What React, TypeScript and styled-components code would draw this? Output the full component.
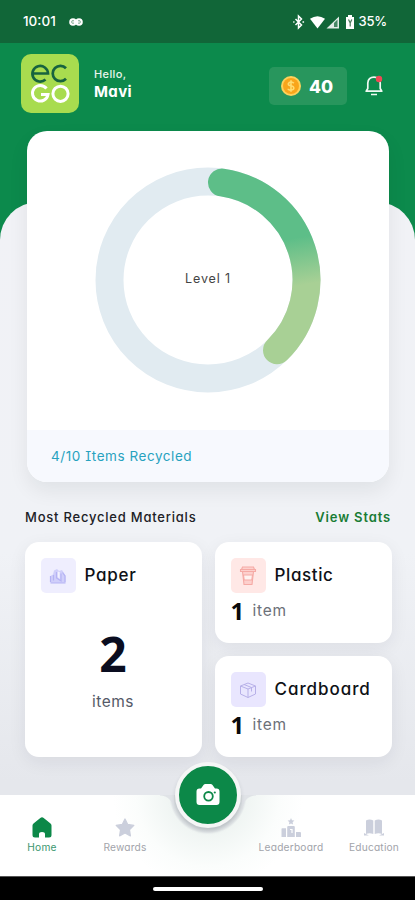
import React from 'react';
import styled, { createGlobalStyle } from 'styled-components';

const GlobalStyle = createGlobalStyle`
  * { box-sizing: border-box; }
  body {
    margin: 0;
    background: #f0f2f6;
    font-family: Inter, "Open Sans", sans-serif;
    font-feature-settings: "cv11", "cv08";
  }
`;

const Screen = styled.div`
  width: 415px;
  height: 900px;
  display: flex;
  flex-direction: column;
  overflow: hidden;
  background: #0c8a4c;
`;

const Label = styled.span<{ $size: number; $weight?: number; $color?: string; $track?: number }>`
  font-size: ${p => p.$size}px;
  font-weight: ${p => p.$weight ?? 400};
  color: ${p => p.$color ?? '#0e1116'};
  letter-spacing: ${p => p.$track ?? 0}px;
  line-height: 1.2;
  white-space: nowrap;
`;

const StatusBar = styled.div`
  height: 43px;
  flex: none;
  display: flex;
  align-items: center;
  gap: 13px;
  padding: 0 28px 0 23px;
  background: #116638;
`;

const StatusIcons = styled.div`
  display: flex;
  align-items: center;
  gap: 3px;
  margin-left: auto;
`;

const Header = styled.header`
  height: 88px;
  flex: none;
  display: flex;
  align-items: flex-start;
  padding: 11px 31px 0 21px;
`;

const Greeting = styled.div`
  display: flex;
  flex-direction: column;
  gap: 2px;
  padding: 14px 0 0 15px;
`;

const Coins = styled.div`
  display: flex;
  align-items: center;
  gap: 8px;
  width: 78px;
  height: 38px;
  margin: 13px 17px 0 auto;
  padding-left: 12px;
  border-radius: 5px;
  background: #28965d;
`;

const Bell = styled.div`
  height: 22px;
  margin-top: 21px;
`;

const Sheet = styled.main`
  flex: 1;
  margin-top: 71px;
  display: flex;
  flex-direction: column;
  border-radius: 38px 38px 0 0;
  background: linear-gradient(#f1f2f6 0, #f0f2f6 350px, #e5e7ec 580px);
`;

const LevelCard = styled.section`
  width: 362px;
  height: 351px;
  flex: none;
  margin: -71px 0 0 27px;
  display: flex;
  flex-direction: column;
  border-radius: 20px;
  overflow: hidden;
  background: #fff;
  box-shadow: 0 9px 20px rgba(20, 24, 30, 0.07);
`;

const RingArea = styled.div`
  display: grid;
  height: 299px;
  padding: 36px 0 0 68px;
  & > * { grid-area: 1 / 1; }
`;

const RingLabel = styled.div`
  width: 226px;
  height: 226px;
  display: grid;
  place-items: center;
  padding-bottom: 4px;
`;

const CardFooter = styled.div`
  flex: 1;
  display: flex;
  align-items: center;
  padding-left: 24px;
  background: #f7f9fe;
`;

const SectionTitle = styled.div`
  display: flex;
  justify-content: space-between;
  align-items: center;
  height: 20px;
  margin: 26px 24px 14px 25px;
`;

const Materials = styled.section`
  display: grid;
  grid-template-columns: 177px 177px;
  grid-template-rows: 101px 101px;
  gap: 13px;
  padding-left: 24.500px;
`;

const MaterialCard = styled.article<{ $tall?: boolean }>`
  grid-row: ${p => (p.$tall ? 'span 2' : 'auto')};
  padding: 16px;
  border-radius: 14px;
  background: #fff;
  box-shadow: 0 5px 18px rgba(30, 34, 50, 0.07);
`;

const MaterialHead = styled.div`
  display: flex;
  align-items: center;
  gap: 9px;
`;

const Tile = styled.div<{ $color: string }>`
  width: 35px;
  height: 35px;
  display: grid;
  place-items: center;
  border-radius: 5px;
  background: ${p => p.$color};
`;

const CountRow = styled.div`
  display: flex;
  align-items: center;
  gap: 9px;
  margin-top: 5px;
`;

const OneDigit = styled.span`
  width: 13px;
  font: 700 24px/26px "Noto Sans", sans-serif;
  color: #08090c;
`;

const CountStack = styled.div`
  display: flex;
  flex-direction: column;
  align-items: center;
  padding-top: 32px;
  gap: 11px;
`;

const BigCount = styled.span`
  font: 700 48px/57px "Open Sans", sans-serif;
  color: #0a0d20;
`;

const Nav = styled.nav`
  position: relative;
  flex: none;
  height: 81px;
  display: flex;
  background: radial-gradient(circle at 208px 0, #d9dde0 34px, #e2e6e8 37px, #f0f5f3 39px, #fbfdfc 72px, #fff 95px);
`;

const NavItem = styled.a<{ $left: number; $width: number }>`
  width: ${p => p.$width}px;
  margin-left: ${p => p.$left}px;
  flex: none;
  padding-top: 21px;
  display: flex;
  flex-direction: column;
  align-items: center;
  gap: 1px;
`;

const Shoulder = styled.i<{ $right?: boolean }>`
  position: absolute;
  top: 0;
  left: ${p => (p.$right ? 242 : 160)}px;
  width: 14px;
  height: 14px;
  background: radial-gradient(circle at ${p => (p.$right ? '100%' : '0')} 100%, transparent 13px, #e0e3e7 14px);
`;

const CameraButton = styled.button`
  position: absolute;
  left: 175px;
  top: -33px;
  width: 66px;
  height: 66px;
  display: grid;
  place-items: center;
  padding: 0;
  border: 4px solid #f5f6f6;
  border-radius: 50%;
  background: #0c8848;
  box-shadow: 0 3px 4px rgba(40, 50, 60, 0.16);
`;

const SystemBar = styled.div`
  height: 24px;
  flex: none;
  display: grid;
  place-items: center;
  background: #000;
  border-top: 1px solid #555;
`;

const Handle = styled.div`
  width: 110px;
  height: 4px;
  border-radius: 2px;
  background: #fff;
`;

const InfinityIcon = () => (
  <svg width="14" height="10" viewBox="0 0 14 10">
    <circle cx="4" cy="5" r="3.800" fill="#fff" />
    <circle cx="10" cy="5" r="3.800" fill="#fff" />
    <path d="M5 3.800Q2.500 3 2.600 5T5 6.100M9 3.800Q11.500 3 11.400 5T9 6.100" fill="none" stroke="#6f9f83" strokeWidth=".9" />
  </svg>
);

const SignalIcons = () => (
  <svg width="64" height="16" viewBox="0 0 64 16">
    <path d="M3.500 5l6 6L6.500 14V2l3 3-6 6M1.200 8h1.300M10.500 8h1.600" fill="none" stroke="#fff" strokeWidth="1.500" />
    <path d="M18 4.800q7.500-5 15 0L25.500 14.500Z" fill="#fff" />
    <path d="M34.500 14.500L47 2.500V14.500Z" fill="#fff" opacity=".88" />
    <path d="M42 9v4h3.500V5.500Z" fill="#116638" opacity=".75" />
    <path d="M54 3h2V1h4v2h2v12h-8Z" fill="#fff" />
    <path d="M56.500 5.500L58.200 9V12.500M59.800 5.500L58.200 9" fill="none" stroke="#4a7c5d" strokeWidth="1.200" />
  </svg>
);

const LogoBox = styled.div`
  width: 58px;
  height: 59px;
  display: flex;
  justify-content: center;
  padding-top: 4px;
  border-radius: 10px;
  background: #a8dc4f;
`;

const LogoIcon = () => (
  <LogoBox aria-label="ecgo">
    <svg width="40" height="48" viewBox="0 0 40 48" fill="none">
      <g stroke="#17633f" strokeWidth="2.700">
        <path d="M2.500 15.500H18A7.800 7.800 0 1 0 15.500 21.500" />
        <path d="M36 10.200A7.700 7.700 0 1 0 36 20.800" />
      </g>
      <g stroke="#fff" strokeWidth="3">
        <path d="M16.500 30.500A7.800 7.800 0 1 0 18 36.500H11" />
        <circle cx="30.500" cy="35.800" r="7.600" />
      </g>
    </svg>
  </LogoBox>
);

const CoinIcon = () => (
  <svg width="20" height="20" viewBox="0 0 20 20">
    <circle cx="10" cy="10" r="10" fill="#ffd15b" />
    <circle cx="10" cy="10" r="8" fill="#f9a51b" />
    <path d="M12.800 7.200Q12 6 10 6T7.300 7.900Q7.300 9.300 10 9.800T12.800 12Q12.800 14 10 14T7.200 12.700M10 4.200V15.800" fill="none" stroke="#ffdc70" strokeWidth="1.600" />
  </svg>
);

const BellIcon = () => (
  <svg width="20" height="22" viewBox="0 0 20 22">
    <path d="M2.200 16.200 3.800 13.500V8Q4.300 2.200 10 2.200T16.200 8v5.500l1.600 2.700ZM7 19.500h6" fill="none" stroke="#effaf3" strokeWidth="1.700" strokeLinejoin="round" />
    <circle cx="15" cy="4" r="3.200" fill="#ee4956" />
  </svg>
);

const ProgressRing = () => (
  <svg width="226" height="226" viewBox="0 0 226 226" fill="none" strokeWidth="28">
    <defs>
      <linearGradient id="progress" gradientUnits="userSpaceOnUse" x1="170" y1="76" x2="178" y2="123">
        <stop stopColor="#5dbe88" />
        <stop offset="1" stopColor="#a8d095" />
      </linearGradient>
    </defs>
    <circle cx="113" cy="113" r="98.500" stroke="#e1ebf1" />
    <path d="M127 15.500A98.500 98.500 0 0 1 182 183.300" stroke="url(#progress)" strokeLinecap="round" />
  </svg>
);

const PaperIcon = () => (
  <svg width="18" height="18" viewBox="0 0 18 18">
    <path d="M1.500 9 4 7.500 5 3.500 8 2l2 2 3-1 3.500 5.500V16h-15Z" fill="#d0cffa" />
    <path d="M1.500 16h15M4.500 8v5.500M7.500 5v6l4.500 3V6.500M13.500 5.500 16 9v6M1.500 9v6" fill="none" stroke="#b5b3f4" strokeWidth="1.200" />
    <path d="M8.700 4.500v5.500l2 2V5Z" fill="#f3f2ff" />
  </svg>
);

const CupIcon = () => (
  <svg width="18" height="20" viewBox="0 0 18 20" fill="#fdd0cd" stroke="#f5aaa5" strokeWidth="1.100">
    <path d="M2.500 3.500 3.500 1h11l1 2.500ZM1.500 3.500h15v2h-15ZM3.500 5.500h11L13 18.500H5Z" />
    <path d="M4.500 9h9L12.800 14H5.200Z" fill="#fff3f1" />
  </svg>
);

const BoxIcon = () => (
  <svg width="18" height="18" viewBox="0 0 18 18" fill="none" stroke="#b7b0e8" strokeWidth="1">
    <path d="M1.500 5L9 2l7.500 3v8L9 16.500 1.500 13ZM1.500 5 9 8l7.500-3M9 8v8.500M5 3.500l7.500 3v4" />
  </svg>
);

const HomeIcon = () => (
  <svg width="22" height="24" viewBox="0 0 22 24">
    <path d="M9.300 2Q11 .7 12.700 2L19.500 7.500Q20.500 8.300 20.500 9.500v9.500q0 2.500-2.500 2.500H14V18q0-2-3-2t-3 2v3.500H4Q1.500 21.500 1.500 19V9.500Q1.500 8.300 2.500 7.500Z" fill="#0c8848" />
  </svg>
);

const StarIcon = () => (
  <svg width="22" height="24" viewBox="0 0 22 24">
    <path d="M11 3l2.700 5.500 6.100.9-4.400 4.300 1 6.100L11 17l-5.400 2.800 1-6.100L2.200 9.400l6.100-.9Z" fill="#cbcfdc" stroke="#cbcfdc" strokeWidth="1.300" strokeLinejoin="round" />
  </svg>
);

const PodiumIcon = () => (
  <svg width="22" height="24" viewBox="0 0 22 24" fill="#cbcfdc">
    <path d="M11 2l1 2.200 2.400.3-1.800 1.700.5 2.400L11 7.400 8.900 8.600l.5-2.400L7.600 4.500 10 4.200ZM1.500 13q0-.8.8-.8H6V21H1.500ZM7.200 11q0-1 1-1h5.600q1 0 1 1v10H7.200ZM16 16h4q1 0 1 1v4h-5Z" />
    <path d="M10 13.500h2v3.500" fill="none" stroke="#fff" strokeWidth="1.200" />
  </svg>
);

const BookIcon = () => (
  <svg width="22" height="24" viewBox="0 0 22 24" fill="#cbcfdc">
    <path d="M3 4.500Q6.500 2.500 10.300 4.500v13.500Q6.500 16.500 3 18ZM11.700 4.500Q15.500 2.500 19 4.500V18q-3.500-1.500-7.300 0ZM1 17v2.500h5ZM21 17v2.500h-5Z" />
  </svg>
);

const CameraIcon = () => (
  <svg width="26" height="24" viewBox="0 0 26 24">
    <path d="M4.500 5.500H6L8.700 1.800Q9.300 1 10.300 1h5.400q1 0 1.600.8L20 5.500h1.500q3 0 3 3v10.500q0 3-3 3h-17q-3 0-3-3V8.500q0-3 3-3Z" fill="#fff" />
    <circle cx="13.500" cy="13.300" r="4.300" fill="none" stroke="#0c8848" strokeWidth="1.800" />
    <circle cx="19.800" cy="9.500" r="1.100" fill="#0c8848" />
  </svg>
);

const navItems = [
  { name: 'Home', icon: <HomeIcon />, left: 12, width: 60, color: '#3b9770', track: 0.25 },
  { name: 'Rewards', icon: <StarIcon />, left: 23, width: 60, color: '#a2a4aa', track: 0.2 },
  { name: 'Leaderboard', icon: <PodiumIcon />, left: 101, width: 70, color: '#a2a4aa', track: 0.2 },
  { name: 'Education', icon: <BookIcon />, left: 17, width: 62, color: '#a2a4aa', track: 0.2 },
];

export default function App() {
  return (
    <Screen>
      <GlobalStyle />
      <StatusBar>
        <Label $size={13.5} $weight={500} $color="#fff">10:01</Label>
        <InfinityIcon />
        <StatusIcons>
          <SignalIcons />
          <Label $size={13} $weight={500} $color="#fff" $track={-0.2}>35%</Label>
        </StatusIcons>
      </StatusBar>
      <Header>
        <LogoIcon />
        <Greeting>
          <Label $size={11} $weight={500} $color="#e7f5ed" $track={0.4}>Hello,</Label>
          <Label $size={15} $weight={700} $color="#fff" $track={0.4}>Mavi</Label>
        </Greeting>
        <Coins>
          <CoinIcon />
          <Label $size={17.5} $weight={800} $color="#fff">40</Label>
        </Coins>
        <Bell><BellIcon /></Bell>
      </Header>
      <Sheet>
        <LevelCard>
          <RingArea>
            <ProgressRing />
            <RingLabel><Label $size={12.5} $color="#444" $track={0.85}>Level 1</Label></RingLabel>
          </RingArea>
          <CardFooter><Label $size={13.5} $color="#27a2bf" $track={0.55}>4/10 Items Recycled</Label></CardFooter>
        </LevelCard>
        <SectionTitle>
          <Label $size={13} $weight={500} $color="#202126" $track={0.78}>Most Recycled Materials</Label>
          <Label $size={13} $weight={600} $color="#187c34" $track={0.85}>View Stats</Label>
        </SectionTitle>
        <Materials>
          <MaterialCard $tall>
            <MaterialHead>
              <Tile $color="#efeefe"><PaperIcon /></Tile>
              <Label $size={17} $weight={500} $track={0.75}>Paper</Label>
            </MaterialHead>
            <CountStack>
              <BigCount>2</BigCount>
              <Label $size={15.5} $color="#555a68" $track={0.5}>items</Label>
            </CountStack>
          </MaterialCard>
          <MaterialCard>
            <MaterialHead>
              <Tile $color="#ffe8e6"><CupIcon /></Tile>
              <Label $size={17} $weight={500} $track={0.6}>Plastic</Label>
            </MaterialHead>
            <CountRow><OneDigit>1</OneDigit><Label $size={15.5} $color="#6c7078" $track={0.8}>item</Label></CountRow>
          </MaterialCard>
          <MaterialCard>
            <MaterialHead>
              <Tile $color="#e9e6fe"><BoxIcon /></Tile>
              <Label $size={17} $weight={500} $track={0.95}>Cardboard</Label>
            </MaterialHead>
            <CountRow><OneDigit>1</OneDigit><Label $size={15.5} $color="#6c7078" $track={0.8}>item</Label></CountRow>
          </MaterialCard>
        </Materials>
      </Sheet>
      <Nav>
        <Shoulder />
        <Shoulder $right />
        {navItems.map(n => (
          <NavItem key={n.name} $left={n.left} $width={n.width}>
            {n.icon}
            <Label $size={10.2} $color={n.color} $track={n.track}>{n.name}</Label>
          </NavItem>
        ))}
        <CameraButton aria-label="Scan"><CameraIcon /></CameraButton>
      </Nav>
      <SystemBar><Handle /></SystemBar>
    </Screen>
  );
}
